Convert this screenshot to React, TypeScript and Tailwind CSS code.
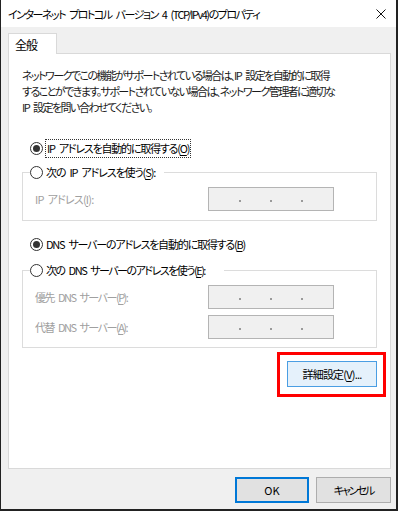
import React from "react";

const font = {
  fontFamily: '"Noto Sans CJK JP", "Noto Sans", sans-serif',
};

function Radio({ checked }: { checked?: boolean }) {
  return (
    <span className="w-[13px] h-[13px] rounded-full border border-[#333333] bg-white flex items-center justify-center shrink-0">
      {checked && <span className="w-[7px] h-[7px] rounded-full bg-[#333333]" />}
    </span>
  );
}

function U({ c }: { c: string }) {
  return <span className="underline underline-offset-2">{c}</span>;
}

function Sp() {
  return <span className="inline-block w-[4px]" />;
}

function IpBox() {
  return (
    <div className="w-[126px] h-[24px] bg-[#f0f0f0] border border-[#b4b4b4] flex items-center shrink-0">
      <div className="flex-1" />
      <span className="w-[2px] h-[2px] bg-[#9a9a9a] mr-[29px] mt-[3px]" />
      <span className="w-[2px] h-[2px] bg-[#9a9a9a] mr-[29px] mt-[3px]" />
      <span className="w-[2px] h-[2px] bg-[#9a9a9a] mt-[3px]" />
      <div className="w-[30px]" />
    </div>
  );
}

export default function App() {
  return (
    <div
      style={font}
      className="w-[398px] h-[511px] flex flex-col bg-[#f0f0f0] border-l border-r-2 border-b-2 border-[#222222] text-[11px] text-black [font-feature-settings:'palt'] leading-[16px]"
    >
      {/* title bar */}
      <div className="h-[27px] bg-white flex items-center pl-[7px] shrink-0">
        <span className="whitespace-nowrap tracking-[-1.5px]">
          インターネット<Sp />プロトコル<Sp />バージョン<Sp />4<Sp />(TCP/IPv4)のプロパティ
        </span>
        <div className="ml-auto mr-[10px] w-[10px] h-[10px]">
          <svg width="10" height="10" viewBox="0 0 10 10">
            <path d="M0.5 0.5 L9.5 9.5 M9.5 0.5 L0.5 9.5" stroke="#111" strokeWidth="1" fill="none" />
          </svg>
        </div>
      </div>

      <div className="flex-1 flex flex-col pl-[7px] pr-[5px] pt-[6px]">
        {/* tabs */}
        <div className="flex h-[20px]">
          <div className="relative z-10 w-[49px] h-[21px] bg-white border border-b-0 border-[#d9d9d9] pl-[6px] pt-[3px] text-[12px] tracking-[-1px]">
            全般
          </div>
        </div>

        {/* panel */}
        <div className="h-[416px] bg-white border border-[#d9d9d9] px-[13px] pt-[13px] flex flex-col">
          <p className="whitespace-nowrap text-[#1a1a1a] tracking-[-1.55px]">
            ネットワークでこの機能がサポートされている場合は、IP<Sp />設定を自動的に取得
            <br />
            することができます。サポートされていない場合は、ネットワーク管理者に適切な
            <br />
            IP<Sp />設定を問い合わせてください。
          </p>

          {/* radio 1 */}
          <div className="mt-[23px] h-[20px] flex items-center pl-[8px]">
            <Radio checked />
            <span className="ml-[2px] px-[1px] border border-dotted border-[#333] leading-[17px] tracking-[-1.2px] whitespace-nowrap">
              IP<Sp />アドレスを自動的に取得する(<U c="O" />)
            </span>
          </div>

          {/* group 1 */}
          <fieldset className="mt-[4px] border border-[#dcdcdc] h-[59px] px-[12px]">
            <legend className="ml-[-5px] bg-white">
              <div className="h-[20px] flex items-center pr-[9px]">
                <Radio />
                <span className="ml-[3px] tracking-[-1.1px] whitespace-nowrap">
                  次の<Sp />IP<Sp />アドレスを使う(<U c="S" />):
                </span>
              </div>
            </legend>
            <div className="flex items-center justify-between mr-[30px] mt-[5px]">
              <span className="text-[#a0a0a0] tracking-[-0.8px] whitespace-nowrap">
                IP<Sp />アドレス(<U c="I" />):
              </span>
              <IpBox />
            </div>
          </fieldset>

          {/* radio dns */}
          <div className="mt-[13px] h-[20px] flex items-center pl-[8px]">
            <Radio checked />
            <span className="ml-[3px] tracking-[-1.2px] whitespace-nowrap">
              DNS<Sp />サーバーのアドレスを自動的に取得する(<U c="B" />)
            </span>
          </div>

          {/* group 2 */}
          <fieldset className="mt-[6px] border border-[#dcdcdc] h-[88px] px-[12px]">
            <legend className="ml-[-5px] bg-white">
              <div className="h-[20px] flex items-center pr-[19px]">
                <Radio />
                <span className="ml-[3px] tracking-[-1.5px] whitespace-nowrap">
                  次の<Sp />DNS<Sp />サーバーのアドレスを使う(<U c="E" />):
                </span>
              </div>
            </legend>
            <div className="flex items-center justify-between mr-[30px] mt-[5px]">
              <span className="text-[#a0a0a0] tracking-[-1.5px] whitespace-nowrap">
                優先<Sp />DNS<Sp />サーバー(<U c="P" />):
              </span>
              <IpBox />
            </div>
            <div className="flex items-center justify-between mr-[30px] mt-[6px]">
              <span className="text-[#a0a0a0] tracking-[-1.5px] whitespace-nowrap">
                代替<Sp />DNS<Sp />サーバー(<U c="A" />):
              </span>
              <IpBox />
            </div>
          </fieldset>

          {/* advanced */}
          <div className="flex justify-end mt-[4px] -mr-[9px]">
            <div className="border-[3px] border-[#ff0000] pl-[7px] pr-[6px] pt-[6px] pb-[7px]">
              <div className="w-[90px] h-[26px] bg-[#e5f1fb] border border-[#4a9ee3] flex items-center justify-center tracking-[-0.8px] whitespace-nowrap">
                詳細設定(<U c="V" />)...
              </div>
            </div>
          </div>
        </div>

        {/* bottom buttons */}
        <div className="flex justify-end gap-[7px] mt-[8px]">
          <div className="w-[74px] h-[26px] bg-[#e1e1e1] border-2 border-[#0078d7] flex items-center justify-center">
            OK
          </div>
          <div className="w-[75px] h-[26px] bg-[#e1e1e1] border border-[#adadad] flex items-center justify-center tracking-[-2px] whitespace-nowrap">
            キャンセル
          </div>
        </div>
      </div>
    </div>
  );
}
